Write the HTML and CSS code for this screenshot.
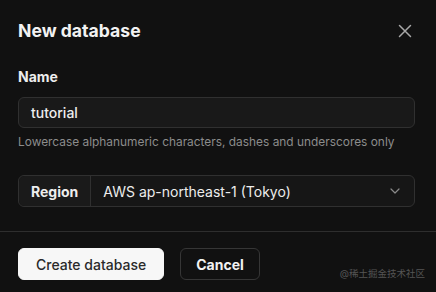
FILE: index.html
```html
<!DOCTYPE html>
<html lang="en">
<head>
    <meta charset="UTF-8">
    <meta name="viewport" content="width=device-width, initial-scale=1.0">
    <title>New database</title>
    <link rel="stylesheet" href="styles.css">
</head>
<body>
    <div class="dialog">
        <div class="header">
            <h1>New database</h1>
            <button class="close" type="button" aria-label="Close">
                <svg width="14" height="14" viewBox="0 0 14 14" fill="none" stroke="#a8a8a8" stroke-width="1.5" stroke-linecap="round">
                    <path d="M1.5 1.5L12.5 12.5M12.5 1.5L1.5 12.5"/>
                </svg>
            </button>
        </div>
        <div class="body">
            <label class="label" for="name">Name</label>
            <div class="input">tutorial</div>
            <p class="hint">Lowercase alphanumeric characters, dashes and underscores only</p>
            <div class="select">
                <span class="select-label">Region</span>
                <span class="select-value">AWS ap-northeast-1 (Tokyo)</span>
                <svg class="chevron" width="10" height="6" viewBox="0 0 10 6" fill="none" stroke="#8a8a8a" stroke-width="1.2" stroke-linecap="round" stroke-linejoin="round">
                    <path d="M1 1L5 5L9 1"/>
                </svg>
            </div>
        </div>
        <div class="footer">
            <button class="btn btn-primary" type="button">Create database</button>
            <button class="btn btn-secondary" type="button">Cancel</button>
        </div>
        <span class="watermark">@稀土掘金技术社区</span>
    </div>
</body>
</html>
```

FILE: styles.css
```css
body {
    margin: 0;
    background: #111111;
    font-family: Inter, "Noto Sans CJK SC", sans-serif;
    color: #ededed;
}
.dialog {
    position: relative;
    width: 436px;
    height: 292px;
    background: #111111;
    overflow: hidden;
}
.header {
    display: flex;
    justify-content: space-between;
    align-items: center;
    padding: 20px 21px 0 18px;
    height: 22px;
}
.header h1 {
    margin: 0;
    font-size: 17.6px;
    font-weight: 700;
    line-height: 22px;
    color: #f2f2f2;
}
.close {
    display: flex;
    align-items: center;
    justify-content: center;
    width: 24px;
    height: 24px;
    margin-right: -2px;
    padding: 0;
    background: none;
    border: none;
}
.body {
    padding: 26px 21px 0 18px;
    display: flex;
    flex-direction: column;
}
.label {
    font-size: 14px;
    font-weight: 700;
    line-height: 18px;
    color: #ededed;
    margin-bottom: 11px;
}
.input {
    height: 29px;
    line-height: 29px;
    padding: 0 12px;
    border: 1px solid #303030;
    border-radius: 6px;
    background: #191919;
    font-size: 14px;
    font-weight: 500;
    color: #ededed;
}
.hint {
    margin: 6px 0 0 0;
    font-size: 11.9px;
    line-height: 16px;
    color: #8c8c8c;
}
.select {
    display: flex;
    align-items: center;
    height: 30px;
    margin-top: 25px;
    border: 1px solid #303030;
    border-radius: 6px;
    background: #161616;
    font-size: 14px;
}
.select-label {
    display: flex;
    align-items: center;
    height: 100%;
    padding: 0 12px;
    border-right: 1px solid #303030;
    background: #1a1a1a;
    border-radius: 6px 0 0 6px;
    font-weight: 700;
    color: #ededed;
}
.select-value {
    flex: 1;
    padding-left: 12px;
    font-weight: 400;
    color: #ededed;
}
.chevron {
    margin-right: 14px;
}
.footer {
    display: flex;
    gap: 16px;
    margin-top: 24px;
    padding: 16px 18px 0 18px;
    border-top: 1px solid #2e2e2e;
}
.btn {
    height: 32px;
    padding: 0 17px;
    border-radius: 6px;
    font-family: Inter, sans-serif;
    font-size: 14px;
}
.btn-primary {
    background: #f7f7f7;
    border: 1px solid #f7f7f7;
    color: #2a2a2a;
    font-weight: 500;
}
.btn-secondary {
    padding: 0 15px;
    background: #111111;
    border: 1px solid #363636;
    color: #f2f2f2;
    font-weight: 700;
}
.watermark {
    position: absolute;
    right: 11px;
    bottom: 12px;
    font-size: 9.5px;
    color: #555555;
}
```
